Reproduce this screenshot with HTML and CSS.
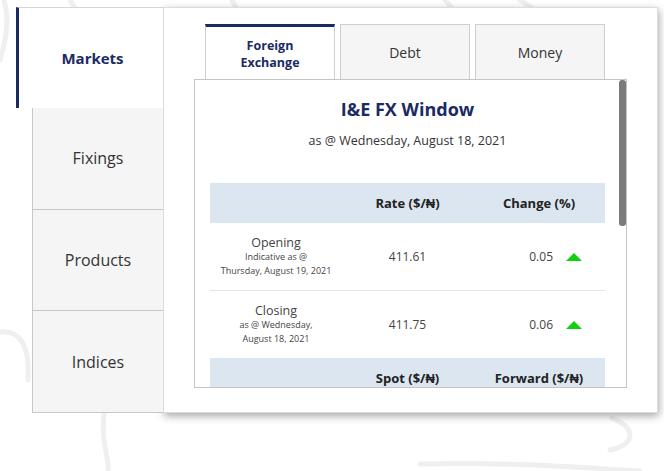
FILE: index.html
```html
<!DOCTYPE html>
<html lang="en">
<head>
  <meta charset="UTF-8" />
  <meta name="viewport" content="width=device-width, initial-scale=1.0"/>
  <title>Markets - FX Window</title>
  <link rel="stylesheet" href="styles.css">
</head>
<body>
  <!-- faint background strokes -->
  <svg class="backdrop" width="664" height="471" viewBox="0 0 664 471">
    <path d="M4 0 C 10 20, 6 40, 0 60" />
    <path d="M70 0 L 78 14" />
    <path d="M232 0 L 238 12" />
    <path d="M445 0 L 462 20" />
    <path d="M520 0 L 544 16" />
    <path d="M0 332 C 20 330, 30 345, 28 380" />
    <path d="M104 414 C 100 440, 110 460, 108 471" />
    <path d="M612 418 C 640 430, 632 446, 610 450" />
    <path d="M420 464 C 500 462, 560 466, 640 471" />
  </svg>

  <div class="markets-widget">
    <!-- Left menu -->
    <div class="side">
      <div class="side-main">Markets</div>
      <div class="side-tab">Fixings</div>
      <div class="side-tab">Products</div>
      <div class="side-tab">Indices</div>
    </div>

    <!-- Main area -->
    <div class="main">
      <div class="tabs">
        <div class="tab active"><span>Foreign</span><span>Exchange</span></div>
        <div class="tab">Debt</div>
        <div class="tab">Money</div>
      </div>

      <div class="panel">
        <div class="thumb"></div>
        <h2>I&amp;E FX Window</h2>
        <p class="asof">as @ Wednesday, August 18, 2021</p>

        <div class="fx-table">
          <div class="row head">
            <div></div>
            <div>Rate ($/₦)</div>
            <div>Change (%)</div>
          </div>
          <div class="row line">
            <div class="label">
              <span class="name">Opening</span>
              <span class="note">Indicative as @</span>
              <span class="note">Thursday, August 19, 2021</span>
            </div>
            <div>411.61</div>
            <div class="change">0.05 <span class="up"></span></div>
          </div>
          <div class="row">
            <div class="label">
              <span class="name">Closing</span>
              <span class="note">as @ Wednesday,</span>
              <span class="note">August 18, 2021</span>
            </div>
            <div>411.75</div>
            <div class="change">0.06 <span class="up"></span></div>
          </div>
          <div class="row head">
            <div></div>
            <div>Spot ($/₦)</div>
            <div>Forward ($/₦)</div>
          </div>
        </div>
      </div>
    </div>
  </div>
</body>
</html>
```

FILE: styles.css
```css
body {
    font-family: "Open Sans", Arial, sans-serif;
    margin: 0;
    padding: 0;
    background-color: #fff;
    color: #333;
    position: relative;
    width: 664px;
    height: 471px;
    overflow: hidden;
}

.backdrop {
    position: absolute;
    left: 0;
    top: 0;
    z-index: 0;
}

.backdrop path {
    fill: none;
    stroke: #efefef;
    stroke-width: 5;
    stroke-linecap: round;
}

/* Widget */
.markets-widget {
    position: relative;
    z-index: 1;
    display: flex;
    margin: 7px 0 0 16px;
    width: 642px;
    height: 406px;
}

/* Left menu */
.side {
    width: 147px;
    display: flex;
    flex-direction: column;
    position: relative;
    z-index: 2;
}

.side-main {
    height: 100px;
    background: #fff;
    border-top: 1px solid #d6d6d6;
    border-left: 3px solid #1b2a63;
    display: flex;
    align-items: center;
    justify-content: center;
    color: #1b2a63;
    font-weight: 700;
    font-size: 15px;
    padding-left: 3px;
}

.side-tab {
    margin-left: 16px;
    height: 101px;
    background: #f5f5f5;
    border: 1px solid #c8c8c8;
    border-top: none;
    border-right: none;
    display: flex;
    align-items: center;
    justify-content: center;
    font-size: 16px;
    color: #333;
}

.side-tab:first-of-type {
    border-top: 1px solid #c8c8c8;
}

/* Main area */
.main {
    flex: 1;
    background: #fff;
    border: 1px solid #dcdcdc;
    box-shadow: 1px 3px 8px rgba(0, 0, 0, 0.35);
    padding-top: 16px;
    box-sizing: border-box;
}

.tabs {
    display: flex;
    gap: 5px;
    margin-left: 41px;
}

.tab {
    width: 130px;
    height: 56px;
    box-sizing: border-box;
    background: #f5f5f5;
    border: 1px solid #cfcfcf;
    display: flex;
    flex-direction: column;
    align-items: center;
    justify-content: center;
    text-align: center;
    font-size: 14px;
    color: #333;
}

.tab.active {
    background: #fff;
    border-top: 3px solid #1b2a63;
    color: #1b2a63;
    font-weight: 700;
    font-size: 12.5px;
    line-height: 17px;
    padding-top: 1px;
}

.panel {
    position: relative;
    margin: -1px 0 0 30px;
    width: 433px;
    height: 309px;
    box-sizing: border-box;
    border: 1px solid #c4c4c4;
    background: #fff;
    padding: 0 21px 0 15px;
    overflow: hidden;
}

.thumb {
    position: absolute;
    right: 0;
    top: 0;
    width: 7px;
    height: 146px;
    border-radius: 3px;
    background: #7b7b7b;
}

.panel h2 {
    margin: 17px 0 0;
    text-align: center;
    font-size: 18px;
    line-height: 24px;
    color: #1b2a63;
    font-weight: 700;
}

.asof {
    margin: 11px 0 0;
    text-align: center;
    font-size: 12.5px;
    line-height: 18px;
    color: #333;
}

/* FX table */
.fx-table {
    margin-top: 33px;
}

.row {
    display: grid;
    grid-template-columns: 132px 131px 132px;
    height: 67px;
    align-items: center;
    text-align: center;
    font-size: 12px;
    color: #444;
}

.row.line {
    border-bottom: 1px solid #e4e4e4;
}

.row.head {
    height: 40px;
    background: #dce6f1;
    font-weight: 700;
    font-size: 13px;
    color: #222;
}

.label {
    display: flex;
    flex-direction: column;
    align-items: center;
}

.label .name {
    font-size: 12.5px;
    line-height: 15px;
}

.label .note {
    font-size: 9px;
    line-height: 14px;
}

.change {
    display: flex;
    justify-content: flex-end;
    align-items: center;
    gap: 13px;
    padding-right: 23px;
}

.up {
    width: 0;
    height: 0;
    border-left: 8px solid transparent;
    border-right: 8px solid transparent;
    border-bottom: 8px solid #0fd10f;
}
```
